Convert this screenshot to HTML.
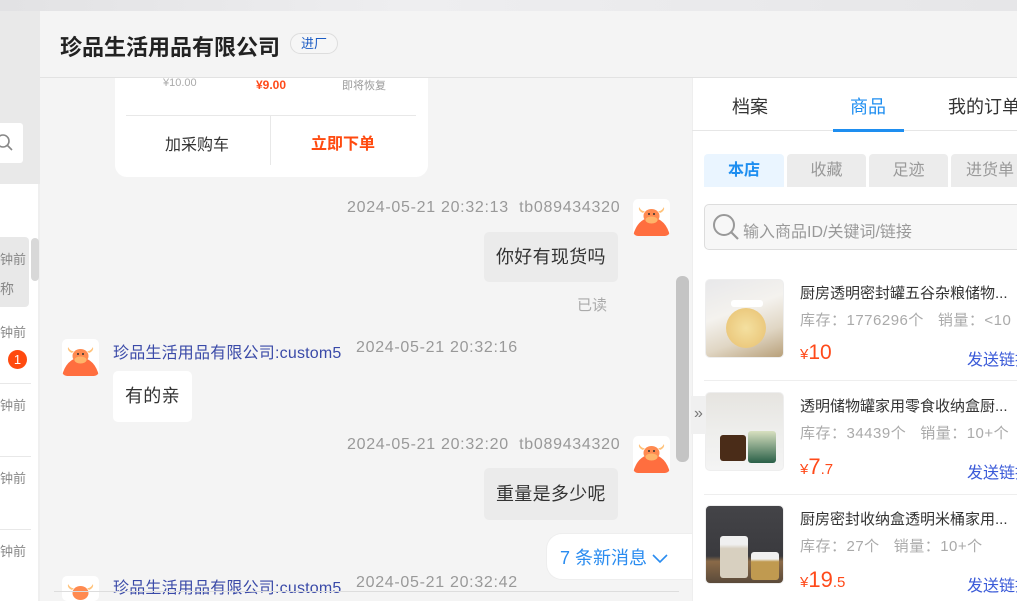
<!DOCTYPE html><html><head><meta charset="utf-8"><style>
*{margin:0;padding:0;box-sizing:border-box}
body{width:1017px;height:601px;overflow:hidden;position:relative;background:#f4f4f4;font-family:"Liberation Sans","Noto Sans CJK SC",sans-serif;color:#333}
.a{position:absolute;white-space:nowrap}
.av{position:absolute;width:37px;height:37px;background:#fff;border-radius:5px;overflow:hidden}
.bub{position:absolute;background:#ebebeb;border-radius:5px;font-size:18px;color:#333;padding:0 12px;height:50px;line-height:50px;letter-spacing:0.3px}
.ts{position:absolute;font-size:16px;color:#999;white-space:nowrap;letter-spacing:0.7px}
.nm{position:absolute;font-size:16px;color:#3a4aa8;white-space:nowrap;letter-spacing:0.2px}
.pimg{position:absolute;left:705px;width:79px;height:79px;border-radius:5px;overflow:hidden;border:1px solid #eee}
.pt{position:absolute;left:800px;font-size:15px;color:#333;white-space:nowrap}
.ps{position:absolute;left:800px;font-size:15px;color:#aaa;white-space:nowrap;letter-spacing:0.5px}
.pp{position:absolute;left:800px;color:#ff4a1a;white-space:nowrap}
.snd{position:absolute;left:967px;font-size:16px;color:#3a5ad8;white-space:nowrap}
.lt{position:absolute;left:0;font-size:13px;color:#888}
</style></head><body>
<div class="a" style="left:0;top:0;width:1017px;height:11px;background:linear-gradient(90deg,#e2e2e4,#eeeef0 40%,#e6e6e8)"></div>
<div class="a" style="left:0;top:11px;width:40px;height:173px;background:#e9e9e9"></div>
<div class="a" style="left:0;top:123px;width:23px;height:40px;background:#fff;border-radius:0 3px 3px 0"></div>
<svg class="a" style="left:0;top:133px" width="16" height="20"><circle cx="3" cy="8" r="6" fill="none" stroke="#888" stroke-width="1.6"/><line x1="7.5" y1="12.5" x2="12" y2="17" stroke="#888" stroke-width="1.6"/></svg>
<div class="a" style="left:0;top:184px;width:40px;height:417px;background:#fff;border-right:2px solid #efefef"></div>
<div class="a" style="left:0;top:237px;width:29px;height:70px;background:#e8e8e8;border-radius:0 4px 4px 0"></div>
<div class="a" style="left:31px;top:238px;width:8px;height:43px;background:#d8d8d8;border-radius:4px"></div>
<div class="lt" style="top:249px">钟前</div>
<div class="lt" style="top:279px;font-size:14px">称</div>
<div class="lt" style="top:322px">钟前</div>
<div class="a" style="left:8px;top:350px;width:19px;height:19px;border-radius:50%;background:#ff4a0f;color:#fff;font-size:13px;text-align:center;line-height:19px">1</div>
<div class="a" style="left:0;top:383px;width:31px;height:1px;background:#e8e8e8"></div>
<div class="lt" style="top:395px">钟前</div>
<div class="a" style="left:0;top:456px;width:31px;height:1px;background:#e8e8e8"></div>
<div class="lt" style="top:468px">钟前</div>
<div class="a" style="left:0;top:529px;width:31px;height:1px;background:#e8e8e8"></div>
<div class="lt" style="top:541px">钟前</div>
<div class="a" style="left:40px;top:11px;width:977px;height:67px;background:#f4f4f4;border-bottom:1px solid #e2e2e2"></div>
<div class="a" style="left:60px;top:30px;font-size:22px;font-weight:bold;color:#222">珍品生活用品有限公司</div>
<div class="a" style="left:290px;top:33px;width:48px;height:21px;border:1px solid #ddd;border-radius:11px;font-size:13px;color:#1a5bc4;text-align:center;line-height:19px;background:#f6f6f6">进厂</div>
<div class="a" style="left:115px;top:78px;width:313px;height:99px;background:#fff;border-radius:0 0 12px 12px"></div>
<div class="a" style="left:163px;top:77px;font-size:11px;color:#aaa">¥10.00</div>
<div class="a" style="left:256px;top:78px;font-size:12px;color:#ff4a1a;font-weight:bold">¥9.00</div>
<div class="a" style="left:342px;top:77px;font-size:11px;color:#999">即将恢复</div>
<div class="a" style="left:126px;top:115px;width:290px;height:1px;background:#e8e8e8"></div>
<div class="a" style="left:270px;top:116px;width:1px;height:49px;background:#e8e8e8"></div>
<div class="a" style="left:165px;top:131px;font-size:16px;color:#333">加采购车</div>
<div class="a" style="left:311px;top:130px;font-size:16px;font-weight:bold;color:#ff4a0f">立即下单</div>
<div class="ts" style="left:347px;top:199px">2024-05-21 20:32:13&nbsp;&nbsp;tb089434320</div>
<div class="av" style="left:633px;top:199px"><svg width="37" height="37"><path d="M0 37 Q4 20 18.5 18 Q33 20 37 37Z" fill="#ff6e3f"/><ellipse cx="18.5" cy="17" rx="8" ry="7" fill="#ff8a50"/><ellipse cx="18.5" cy="21" rx="6" ry="3.5" fill="#ffb46a"/><path d="M10 14 Q5 12 6 8 Q9 13 12 12Z M27 14 Q32 12 31 8 Q28 13 25 12Z" fill="#ffc27a"/><circle cx="16" cy="15" r="1" fill="#333"/><circle cx="21" cy="15" r="1" fill="#333"/></svg></div>
<div class="bub" style="left:484px;top:232px">你好有现货吗</div>
<div class="a" style="left:577px;top:294px;font-size:15px;color:#aaa">已读</div>
<div class="av" style="left:62px;top:339px"><svg width="37" height="37"><path d="M0 37 Q4 20 18.5 18 Q33 20 37 37Z" fill="#ff6e3f"/><ellipse cx="18.5" cy="17" rx="8" ry="7" fill="#ff8a50"/><ellipse cx="18.5" cy="21" rx="6" ry="3.5" fill="#ffb46a"/><path d="M10 14 Q5 12 6 8 Q9 13 12 12Z M27 14 Q32 12 31 8 Q28 13 25 12Z" fill="#ffc27a"/><circle cx="16" cy="15" r="1" fill="#333"/><circle cx="21" cy="15" r="1" fill="#333"/></svg></div>
<div class="nm" style="left:113px;top:339px">珍品生活用品有限公司:custom5</div>
<div class="ts" style="left:356px;top:339px">2024-05-21 20:32:16</div>
<div class="bub" style="left:113px;top:371px;background:#fff;height:51px;line-height:51px">有的亲</div>
<div class="ts" style="left:347px;top:436px">2024-05-21 20:32:20&nbsp;&nbsp;tb089434320</div>
<div class="av" style="left:633px;top:436px"><svg width="37" height="37"><path d="M0 37 Q4 20 18.5 18 Q33 20 37 37Z" fill="#ff6e3f"/><ellipse cx="18.5" cy="17" rx="8" ry="7" fill="#ff8a50"/><ellipse cx="18.5" cy="21" rx="6" ry="3.5" fill="#ffb46a"/><path d="M10 14 Q5 12 6 8 Q9 13 12 12Z M27 14 Q32 12 31 8 Q28 13 25 12Z" fill="#ffc27a"/><circle cx="16" cy="15" r="1" fill="#333"/><circle cx="21" cy="15" r="1" fill="#333"/></svg></div>
<div class="bub" style="left:484px;top:468px;height:52px;line-height:52px">重量是多少呢</div>
<div class="a" style="left:546px;top:533px;width:146px;height:47px;background:#fff;border-radius:16px 0 0 16px;border:1px solid #eee;border-right:none"></div>
<div class="a" style="left:560px;top:544px;font-size:18px;color:#2a8cf0">7 条新消息 <svg width="16" height="12" style="vertical-align:middle"><path d="M1 2 L8 9 L15 2" fill="none" stroke="#2a8cf0" stroke-width="1.6"/></svg></div>
<div class="av" style="left:62px;top:576px;height:25px"><svg width="37" height="37"><ellipse cx="18.5" cy="17" rx="8" ry="7" fill="#ff8a50"/><path d="M10 14 Q5 12 6 8 Q9 13 12 12Z M27 14 Q32 12 31 8 Q28 13 25 12Z" fill="#ffc27a"/></svg></div>
<div class="nm" style="left:113px;top:574px">珍品生活用品有限公司:custom5</div>
<div class="ts" style="left:356px;top:574px">2024-05-21 20:32:42</div>
<div class="a" style="left:54px;top:591px;width:625px;height:1px;background:#ddd"></div>
<div class="a" style="left:676px;top:276px;width:13px;height:186px;background:#c4c4c4;border-radius:6px"></div>
<div class="a" style="left:692px;top:78px;width:325px;height:523px;background:#fff;border-left:1px solid #eee"></div>
<div class="a" style="left:732px;top:93px;font-size:18px;color:#333">档案</div>
<div class="a" style="left:850px;top:93px;font-size:18px;color:#1e8ef0">商品</div>
<div class="a" style="left:948px;top:93px;font-size:18px;color:#333">我的订单</div>
<div class="a" style="left:692px;top:130px;width:325px;height:1px;background:#e6e6e6"></div>
<div class="a" style="left:833px;top:129px;width:71px;height:3px;background:#1e8ef0"></div>
<div class="a" style="left:704px;top:154px;width:80px;height:33px;background:#eaf5ff;border-radius:4px 4px 0 0;color:#1e8ef0;font-size:16px;text-align:center;line-height:33px;font-weight:bold">本店</div>
<div class="a" style="left:787px;top:154px;width:79px;height:33px;background:#ececec;border-radius:4px 4px 0 0;color:#999;font-size:16px;text-align:center;line-height:33px">收藏</div>
<div class="a" style="left:869px;top:154px;width:79px;height:33px;background:#ececec;border-radius:4px 4px 0 0;color:#999;font-size:16px;text-align:center;line-height:33px">足迹</div>
<div class="a" style="left:951px;top:154px;width:70px;height:33px;background:#ececec;border-radius:4px 4px 0 0;color:#999;font-size:16px;line-height:33px;padding-left:15px">进货单</div>
<div class="a" style="left:704px;top:204px;width:320px;height:46px;background:#f7f7f7;border:1px solid #ddd;border-radius:5px"></div>
<svg class="a" style="left:711px;top:212px" width="30" height="30"><circle cx="13" cy="13" r="10" fill="none" stroke="#999" stroke-width="2"/><line x1="20" y1="20" x2="27" y2="27" stroke="#999" stroke-width="2.2"/></svg>
<div class="a" style="left:743px;top:218px;font-size:16px;color:#999">输入商品ID/关键词/链接</div>
<div class="pimg" style="top:279px;background:linear-gradient(160deg,#e8e8ea 0%,#f4f2ee 40%,#e0d6c4 70%,#b8a07a 100%)"><div style="position:absolute;left:20px;top:28px;width:40px;height:40px;border-radius:50%;background:radial-gradient(#f4e0a0,#e8c070)"></div><div style="position:absolute;left:25px;top:20px;width:32px;height:7px;background:#fff;border-radius:3px"></div></div>
<div class="pt" style="top:282px">厨房透明密封罐五谷杂粮储物...</div>
<div class="ps" style="top:309px">库存：1776296个&nbsp;&nbsp;&nbsp;销量：&lt;10</div>
<div class="pp" style="top:341px;font-size:21px"><span style="font-size:15px">¥</span>10</div>
<div class="snd" style="top:346px">发送链接</div>
<div class="a" style="left:704px;top:380px;width:313px;height:1px;background:#eee"></div>
<div class="pimg" style="top:392px;background:linear-gradient(180deg,#e6e4e0 0%,#eeeeec 50%,#f4f4f4 100%)"><div style="position:absolute;left:14px;top:42px;width:26px;height:26px;background:#4a2c18;border-radius:3px"></div><div style="position:absolute;left:42px;top:38px;width:28px;height:32px;background:linear-gradient(#d8e0c0,#2a6048);border-radius:3px"></div></div>
<div class="pt" style="top:395px">透明储物罐家用零食收纳盒厨...</div>
<div class="ps" style="top:422px">库存：34439个&nbsp;&nbsp;&nbsp;销量：10+个</div>
<div class="pp" style="top:454px;font-size:22px"><span style="font-size:15px">¥</span>7<span style="font-size:15px">.7</span></div>
<div class="snd" style="top:459px">发送链接</div>
<div class="a" style="left:704px;top:494px;width:313px;height:1px;background:#eee"></div>
<div class="pimg" style="top:505px;background:linear-gradient(180deg,#444448 0%,#3a3a3e 65%,#8a6a48 72%,#5a4a3a 100%)"><div style="position:absolute;left:14px;top:30px;width:28px;height:42px;background:linear-gradient(#f0f0f0 20%,#d8d0c0 30%);border-radius:3px"></div><div style="position:absolute;left:45px;top:46px;width:28px;height:28px;background:linear-gradient(#f0f0f0 25%,#c09a50 35%);border-radius:3px"></div></div>
<div class="pt" style="top:508px">厨房密封收纳盒透明米桶家用...</div>
<div class="ps" style="top:535px">库存：27个&nbsp;&nbsp;&nbsp;销量：10+个</div>
<div class="pp" style="top:567px;font-size:22px"><span style="font-size:15px">¥</span>19<span style="font-size:15px">.5</span></div>
<div class="snd" style="top:572px">发送链接</div>
<div class="a" style="left:691px;top:396px;width:15px;height:38px;background:#f0f0f0;color:#777;font-size:16px;line-height:36px;text-align:center">»</div>
</body></html>
